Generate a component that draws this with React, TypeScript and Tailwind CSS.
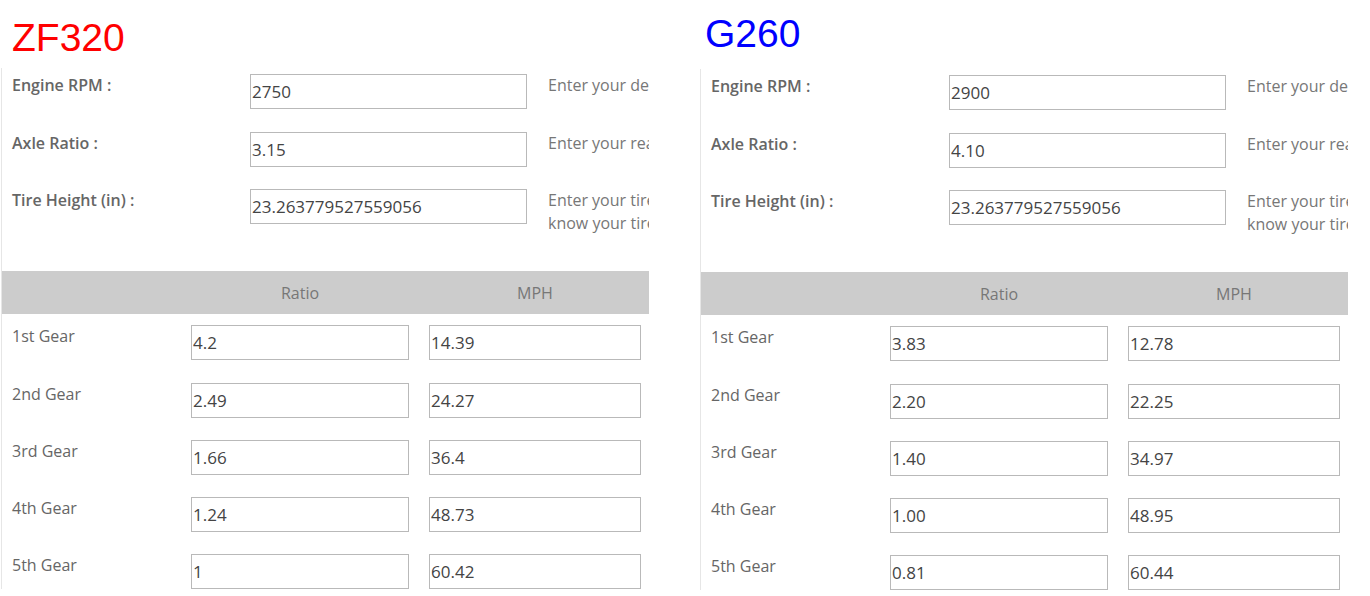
import React from "react";

type PanelProps = {
  title: string;
  titleClass: string;
  outerClass: string;
  rpm: string;
  axle: string;
  tire: string;
  gears: [string, string, string][];
};

function Field({ value, w }: { value: string; w: string }) {
  return (
    <input
      readOnly
      defaultValue={value}
      className={`${w} h-[35px] shrink-0 border border-[#b9b9b9] bg-white pl-[1px] text-[17px] text-[#444] outline-none font-['Open_Sans',sans-serif]`}
    />
  );
}

function Panel({ title, titleClass, outerClass, rpm, axle, tire, gears }: PanelProps) {
  return (
    <div className={`w-[648px] shrink-0 ${outerClass}`}>
      <h1
        className={`h-[68px] text-[39px] leading-[40px] font-normal font-['Liberation_Sans',Arial,sans-serif] ${titleClass}`}
      >
        {title}
      </h1>
      <div className="border-l border-[#e6e6e6] overflow-hidden">
        <div className="h-[203px] pt-[6px] flex flex-col">
          <div className="flex items-start h-[58px]">
            <div className="w-[248px] shrink-0 pl-[10px] -mt-[1px] text-[16px] leading-[24px] font-semibold text-[#666]">
              Engine RPM :
            </div>
            <Field value={rpm} w="w-[277px]" />
            <div className="ml-[21px] whitespace-nowrap text-[16px] leading-[23px] text-[#777]">
              Enter your desired engine RPM at cruising speed.
            </div>
          </div>
          <div className="flex items-start h-[57px]">
            <div className="w-[248px] shrink-0 pl-[10px] -mt-[1px] text-[16px] leading-[24px] font-semibold text-[#666]">
              Axle Ratio :
            </div>
            <Field value={axle} w="w-[277px]" />
            <div className="ml-[21px] whitespace-nowrap text-[16px] leading-[23px] text-[#777]">
              Enter your rear axle ratio.
            </div>
          </div>
          <div className="flex items-start">
            <div className="w-[248px] shrink-0 pl-[10px] -mt-[1px] text-[16px] leading-[24px] font-semibold text-[#666]">
              Tire Height (in) :
            </div>
            <Field value={tire} w="w-[277px]" />
            <div className="ml-[21px] whitespace-nowrap text-[16px] leading-[23px] text-[#777]">
              Enter your tire height in inches. If you don't
              <br />
              know your tire height, use the tire size calculator.
            </div>
          </div>
        </div>
        <div className="h-[43px] bg-[#cccccc] flex items-center text-[16px] text-[#777]">
          <div className="w-[189px] shrink-0" />
          <div className="w-[218px] shrink-0 text-center">Ratio</div>
          <div className="w-[20px] shrink-0" />
          <div className="w-[212px] shrink-0 text-center">MPH</div>
        </div>
        <div className="pt-[11px] flex flex-col gap-[22px]">
          {gears.map(([name, ratio, mph], i) => (
            <div key={name} className={`flex items-start ${i === 0 ? "mb-[1px]" : ""}`}>
              <div className="w-[189px] shrink-0 pl-[10px] -mt-[1px] text-[16px] leading-[24px] text-[#666]">
                {name}
              </div>
              <Field value={ratio} w="w-[218px]" />
              <div className="w-[20px] shrink-0" />
              <Field value={mph} w="w-[212px]" />
            </div>
          ))}
        </div>
      </div>
    </div>
  );
}

export default function App() {
  return (
    <div className="w-[1370px] h-[596px] overflow-hidden bg-white flex items-start font-['Open_Sans',sans-serif]">
      <Panel
        title="ZF320"
        titleClass="text-[#ff0000] pt-[18px] pl-[11px]"
        outerClass="ml-[1px]"
        rpm="2750"
        axle="3.15"
        tire="23.263779527559056"
        gears={[
          ["1st Gear", "4.2", "14.39"],
          ["2nd Gear", "2.49", "24.27"],
          ["3rd Gear", "1.66", "36.4"],
          ["4th Gear", "1.24", "48.73"],
          ["5th Gear", "1", "60.42"],
        ]}
      />
      <Panel
        title="G260"
        titleClass="text-[#0000ff] pt-[13px] pl-[5px]"
        outerClass="ml-[51px] mt-[1px]"
        rpm="2900"
        axle="4.10"
        tire="23.263779527559056"
        gears={[
          ["1st Gear", "3.83", "12.78"],
          ["2nd Gear", "2.20", "22.25"],
          ["3rd Gear", "1.40", "34.97"],
          ["4th Gear", "1.00", "48.95"],
          ["5th Gear", "0.81", "60.44"],
        ]}
      />
    </div>
  );
}
